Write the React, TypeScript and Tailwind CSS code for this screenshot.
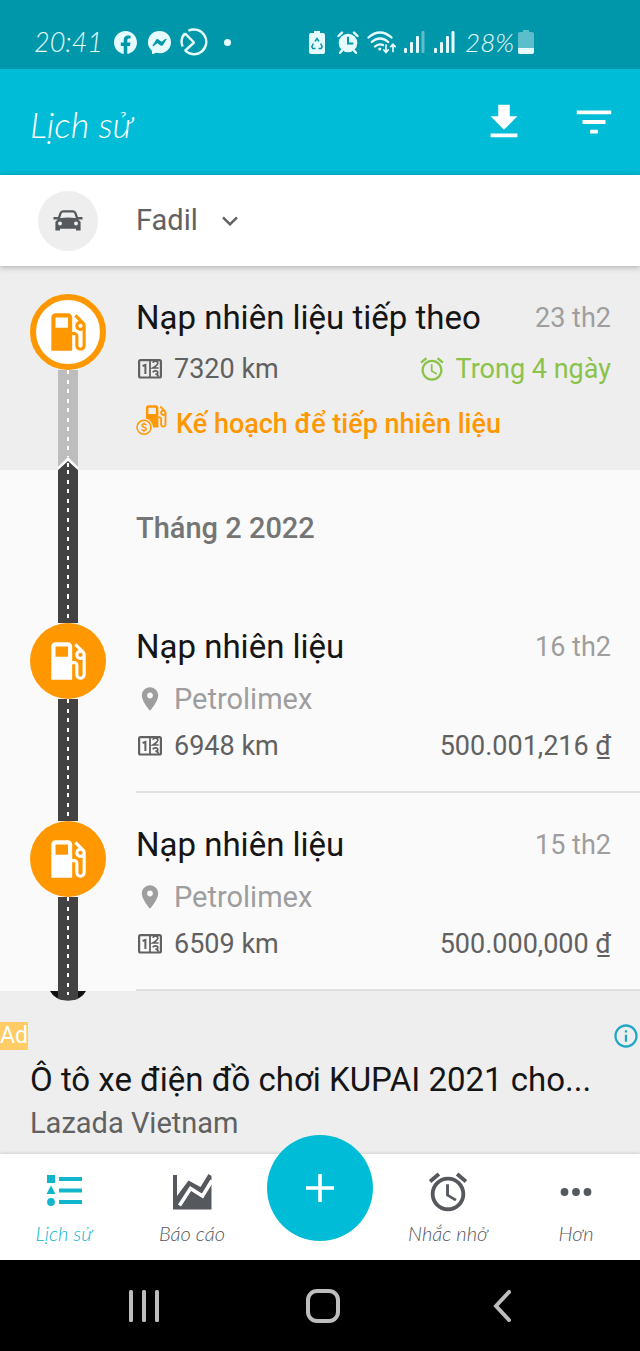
import type { ReactNode } from "react";

type IconProps = { className?: string };

function Glyph({ d, className = "" }: { d: string; className?: string }) {
  return (
    <svg viewBox="0 0 24 24" className={`shrink-0 fill-current ${className}`} aria-hidden="true">
      <path d={d} />
    </svg>
  );
}

const PUMP =
  "M19.77 7.23l.01-.01-3.72-3.72L15 4.56l2.11 2.11c-.94.36-1.61 1.26-1.61 2.33 0 1.38 1.12 2.5 2.5 2.5.36 0 .69-.08 1-.21v7.21c0 .55-.45 1-1 1s-1-.45-1-1V14c0-1.1-.9-2-2-2h-1V5c0-1.1-.9-2-2-2H6c-1.1 0-2 .9-2 2v16h10v-7.5h1.5v5c0 1.38 1.12 2.5 2.5 2.5s2.5-1.12 2.5-2.5V9c0-.69-.28-1.32-.73-1.77zM12 10H6V5h6v5zm6 0c-.55 0-1-.45-1-1s.45-1 1-1 1 .45 1 1-.45 1-1 1z";
const ALARM =
  "M22 5.72l-4.6-3.86-1.29 1.53 4.6 3.86L22 5.72zM7.88 3.39L6.6 1.86 2 5.71l1.29 1.53 4.59-3.85zM12.5 8H11v6l4.75 2.85.75-1.23-4-2.37V8zM12 4c-4.97 0-9 4.03-9 9s4.02 9 9 9c4.97 0 9-4.03 9-9s-4.03-9-9-9zm0 16c-3.87 0-7-3.13-7-7s3.13-7 7-7 7 3.13 7 7-3.13 7-7 7z";
const PLACE =
  "M12 2C8.13 2 5 5.13 5 9c0 5.25 7 13 7 13s7-7.75 7-13c0-3.87-3.13-7-7-7zm0 9.5c-1.38 0-2.5-1.12-2.5-2.5s1.12-2.5 2.5-2.5 2.5 1.12 2.5 2.5-1.12 2.5-2.5 2.5z";
const DOWNLOAD = "M19 9h-4V3H9v6H5l7 7 7-7zM5 18v2h14v-2H5z";
const FILTER = "M10 18h4v-2h-4v2zM3 6v2h18V6H3zm3 7h12v-2H6v2z";
const INFO =
  "M11 7h2v2h-2zm0 4h2v6h-2zm1-9C6.48 2 2 6.48 2 12s4.48 10 10 10 10-4.48 10-10S17.52 2 12 2zm0 18c-4.41 0-8-3.59-8-8s3.59-8 8-8 8 3.59 8 8-3.59 8-8 8z";
const FACEBOOK =
  "M24 12.07C24 5.41 18.63 0 12 0S0 5.4 0 12.07C0 18.1 4.39 23.1 10.13 24v-8.44H7.08v-3.49h3.04V9.41c0-3.02 1.8-4.7 4.54-4.7 1.31 0 2.68.24 2.68.24v2.97h-1.5c-1.5 0-1.96.93-1.96 1.89v2.26h3.32l-.53 3.5h-2.8V24C19.62 23.1 24 18.1 24 12.07";
const MESSENGER =
  "M.001 11.639C.001 4.949 5.241 0 12.001 0S24 4.95 24 11.639c0 6.689-5.24 11.638-12 11.638-1.21 0-2.38-.16-3.47-.46a.96.96 0 00-.64.05l-2.39 1.05a.96.96 0 01-1.35-.85l-.07-2.14a.97.97 0 00-.32-.68A11.39 11.389 0 01.002 11.64zm8.32-2.19l-3.52 5.6c-.35.53.32 1.139.82.75l3.79-2.87c.26-.2.6-.2.87 0l2.8 2.1c.84.63 2.04.4 2.6-.48l3.52-5.6c.35-.53-.32-1.13-.82-.75l-3.79 2.87c-.25.2-.6.2-.86 0l-2.8-2.1a1.8 1.8 0 00-2.61.48z";

function Car({ className = "" }: IconProps) {
  return (
    <svg viewBox="0 0 30 22" className={className} aria-hidden="true">
      <path d="M5.400 9.500 7.600 3.200Q8.200 1.400 10 1.400h10q1.800 0 2.400 1.800L24.600 9.500" fill="none" stroke="currentColor" strokeWidth="2.300" />
      <path d="M.5 7h4.400v2.400H.5zM25.100 7h4.400v2.400h-4.400z" fill="currentColor" />
      <path
        fillRule="evenodd"
        fill="currentColor"
        d="M6 8.200q9-1.600 18 0l3.600 3.600v8.800h-4.600v-1.800H7v1.800H2.400v-8.800zM7 11.400a2 2 0 1 0 0 4 2 2 0 0 0 0-4zM23 11.400a2 2 0 1 0 0 4 2 2 0 0 0 0-4z"
      />
    </svg>
  );
}

function Odometer({ className = "" }: IconProps) {
  return (
    <svg viewBox="0 0 24 20" className={className} fill="none" stroke="currentColor" aria-hidden="true">
      <rect x="1.100" y="1.100" width="21.800" height="17.400" rx="1.500" strokeWidth="2.200" />
      <path d="M12 1v17.500" strokeWidth="1.800" />
      <path d="M4.600 7 7.400 5.900v9" strokeWidth="2" />
      <path d="M14.800 3.800q.6-1.600 2.600-1.600 2.400 0 2.400 2 0 1.600-5 4.800h5.800" strokeWidth="1.700" />
      <path d="M14.800 13.400q.6-1.600 2.600-1.600 2.400 0 2.400 1.700 0 1.700-2.400 1.700 2.800.2 2.800 2.600" strokeWidth="1.700" />
    </svg>
  );
}

function PlanIcon({ className = "" }: IconProps) {
  return (
    <svg viewBox="0 0 32 34" className={className} aria-hidden="true">
      <g transform="translate(5 -1.500) scale(1.240)">
        <path d={PUMP} fill="currentColor" />
      </g>
      <circle cx="8" cy="24.300" r="9" fill="#eeeeee" />
      <circle cx="8" cy="24.300" r="7" fill="none" stroke="currentColor" strokeWidth="1.500" />
      <path
        d="M10.300 22.300Q9.900 21 8 21t-2.100 1.500q0 1.300 2.100 1.700t2.200 1.800q0 1.500-2.200 1.500-2 0-2.400-1.400M8 19.600V21M8 27.500V29"
        fill="none"
        stroke="currentColor"
        strokeWidth="1.400"
      />
    </svg>
  );
}

function SignalBars({ weak = false }: { weak?: boolean }) {
  return (
    <svg viewBox="0 0 21 22" className="h-[22px] w-[21px] fill-current" aria-hidden="true">
      <rect x="0" y="17" width="3" height="5" rx="1" />
      <rect x="6" y="11" width="3" height="11" rx="1" />
      <rect x="12" y="5" width="3" height="17" rx="1" />
      <rect x="17.500" y="0" width="3" height="22" rx="1" opacity={weak ? 0.4 : 1} />
    </svg>
  );
}

function StatusBar() {
  return (
    <div className="flex h-[69px] items-end justify-between bg-[#0097aa] pr-[106px] pb-[11px] pl-[34px] text-[#e6fbfd]">
      <div className="flex h-8 items-center">
        <span className="w-20 font-[Lato] text-[27px] font-light italic">20:41</span>
        <Glyph d={FACEBOOK} className="size-[23px]" />
        <Glyph d={MESSENGER} className="ml-[11px] size-[23px]" />
        <svg viewBox="0 0 28 28" className="ml-[9px] size-7" fill="none" stroke="currentColor" strokeWidth="2.400" aria-hidden="true">
          <path d="M8.300 2.800A12.400 12.400 0 1 1 5.200 22.700M2.600 18.500A12.400 12.400 0 0 1 5 5.400" />
          <path d="M5 5.400 14 14.500 4.800 23" strokeLinejoin="round" />
        </svg>
        <span className="ml-4 size-[7px] rounded-full bg-current" />
      </div>
      <div className="flex h-8 items-center">
        <svg viewBox="0 0 16 23" className="h-[23px] w-4" aria-hidden="true">
          <path d="M5 0h6v2h3q2 0 2 2v17q0 2-2 2H2q-2 0-2-2V4q0-2 2-2h3z" fill="currentColor" />
          <path d="M6 10.500 8 7.500l2 3M11.600 12.500l1.600 3.200-1 1.800H9.500M6.500 17.500H3.800l-1-1.800 1.600-3.200" fill="none" stroke="#0097aa" strokeWidth="1.500" />
        </svg>
        <svg viewBox="0 0 22 23" className="ml-3 h-[23px] w-[22px]" fill="none" stroke="currentColor" strokeLinecap="round" aria-hidden="true">
          <circle cx="11" cy="12" r="9.300" fill="currentColor" stroke="none" />
          <path d="M1.500 5 5 1.600M20.500 5 17 1.600M5 19.500l-2 2.300M17 19.500l2 2.300" strokeWidth="2.400" />
          <path d="M11 6.500v6h4.500" stroke="#0097aa" strokeWidth="2" />
        </svg>
        <svg viewBox="0 0 30 23" className="ml-2 h-[23px] w-[30px]" fill="none" stroke="currentColor" strokeWidth="2.300" strokeLinecap="round" aria-hidden="true">
          <path d="M1.500 6.500Q7 1.500 13 1.500t11.500 5M4.800 11Q8.500 7.500 13 7.500t8.200 3.500M8 15.500q2.300-2.200 5-2.200 1.700 0 3 .8" />
          <circle cx="12.800" cy="18" r="1.600" fill="currentColor" stroke="none" />
          <path d="M19 14v7M16.800 19l2.200 2.400 2.200-2.400M26 20.500v-7M23.800 15.600 26 13.200l2.200 2.400" strokeWidth="1.700" />
        </svg>
        <span className="ml-[7px] flex gap-[9px]">
          <SignalBars weak />
          <SignalBars />
        </span>
        <span className="ml-[10px] font-[Lato] text-[26px] font-light italic">28%</span>
        <svg viewBox="0 0 16 24" className="ml-1 h-6 w-4" aria-hidden="true">
          <path d="M5 0h6v2h3q2 0 2 2v18q0 2-2 2H2q-2 0-2-2V4q0-2 2-2h3z" fill="currentColor" opacity="0.400" />
          <path d="M0 18h16v4q0 2-2 2H2q-2 0-2-2z" fill="currentColor" />
        </svg>
      </div>
    </div>
  );
}

function AppBar() {
  return (
    <header className="flex h-[106px] items-center bg-[#00bcd7] pr-[23px] pl-[30px] text-white">
      <h1 className="flex-1 pt-1 font-[Lato] text-[36px] font-light italic">Lịch sử</h1>
      <button type="button" aria-label="Tải xuống">
        <Glyph d={DOWNLOAD} className="size-[46px]" />
      </button>
      <button type="button" aria-label="Lọc" className="ml-11">
        <Glyph d={FILTER} className="size-[46px]" />
      </button>
    </header>
  );
}

function VehiclePicker() {
  return (
    <div className="relative flex h-[91px] items-center bg-white pl-[38px] text-[#616161] shadow-[0_1px_6px_rgba(0,0,0,0.3)]">
      <span className="flex size-[60px] items-center justify-center rounded-full bg-[#eeeeee] text-[#55585c]">
        <Car className="h-[22px] w-[30px]" />
      </span>
      <label className="ml-[38px] flex items-center">
        <select aria-label="Xe" className="field-sizing-content appearance-none bg-transparent pr-[42px] text-[29px]">
          <option>Fadil</option>
        </select>
        <svg viewBox="0 0 16 10" className="pointer-events-none -ml-[18px] h-[10px] w-4" fill="none" stroke="currentColor" strokeWidth="2.500" aria-hidden="true">
          <path d="M1 1.300 8 8.300l7-7" />
        </svg>
      </label>
    </div>
  );
}

function Road({ className = "" }: IconProps) {
  return (
    <div className={`flex w-5 justify-center ${className}`}>
      <div className="w-[2px] bg-[repeating-linear-gradient(to_bottom,white_0_4px,transparent_4px_10px,white_10px_14px,transparent_14px_19px)]" />
    </div>
  );
}

function Entry({ title, date, rail, children, className = "" }: { title: string; date: string; rail: ReactNode; children: ReactNode; className?: string }) {
  return (
    <li className="flex">
      <div className="flex w-[136px] shrink-0 flex-col items-center">{rail}</div>
      <div className={`min-w-0 flex-1 pt-8 pr-[29px] ${className}`}>
        <div className="flex items-center justify-between">
          <h3 className="text-[33px] leading-10 text-[#151515]">{title}</h3>
          <time className="text-[27px] leading-10 text-[#9e9e9e]">{date}</time>
        </div>
        {children}
      </div>
    </li>
  );
}

function Distance({ value }: { value: string }) {
  return (
    <span className="flex items-center gap-3">
      <Odometer className="ml-[2px] h-5 w-6" />
      {value}
    </span>
  );
}

function FuelEntry({ date, distance, cost }: { date: string; distance: string; cost: string }) {
  return (
    <Entry
      title="Nạp nhiên liệu"
      date={date}
      className="border-b-2 border-[#e0e0e0] pb-[29px]"
      rail={
        <>
          <Road className="h-7 bg-[#424242]" />
          <span className="flex size-[76px] items-center justify-center rounded-full bg-[#ff9800] text-white">
            <Glyph d={PUMP} className="size-[50px]" />
          </span>
          <Road className="flex-1 bg-[#424242]" />
        </>
      }
    >
      <p className="mt-4 flex items-center gap-[10px] text-[29px] leading-8 text-[#9e9e9e]">
        <Glyph d={PLACE} className="size-7" />
        Petrolimex
      </p>
      <p className="mt-[15px] flex items-center justify-between text-[27px] leading-8 text-[#616161]">
        <Distance value={distance} />
        <span>{cost}</span>
      </p>
    </Entry>
  );
}

function NextFuel() {
  return (
    <ul className="bg-[#eeeeee]">
      <Entry
        title="Nạp nhiên liệu tiếp theo"
        date="23 th2"
        className="pb-[30px]"
        rail={
          <>
            <span className="mt-7 flex size-[76px] items-center justify-center rounded-full border-6 border-[#ff9800] bg-white text-[#ff9800]">
              <Glyph d={PUMP} className="size-[50px]" />
            </span>
            <Road className="flex-1 bg-[#bdbdbd]" />
            <svg viewBox="0 0 20 13" className="h-[13px] w-5" aria-hidden="true">
              <path d="M0 0h20v13H0z" fill="#bdbdbd" />
              <path d="M0 10 10 0l10 10v3H0z" fill="#ffffff" />
              <path d="M0 13 10 4l10 9z" fill="#424242" />
              <path d="M9 6h2v4H9z" fill="#ffffff" />
            </svg>
          </>
        }
      >
        <p className="mt-[15px] flex items-center justify-between text-[27px] leading-8 text-[#616161]">
          <Distance value="7320 km" />
          <span className="flex items-center gap-[10px] text-[#8bc34a]">
            <Glyph d={ALARM} className="size-7" />
            Trong 4 ngày
          </span>
        </p>
        <button type="button" className="mt-[23px] flex items-center gap-2 text-[27px] leading-8 font-medium text-[#ff9800]">
          <PlanIcon className="-mt-2 h-[34px] w-8" />
          Kế hoạch để tiếp nhiên liệu
        </button>
      </Entry>
    </ul>
  );
}

function History() {
  return (
    <section>
      <div className="flex h-[125px]">
        <div className="flex w-[136px] justify-center">
          <Road className="bg-[#424242]" />
        </div>
        <h2 className="flex items-center pb-2 text-[29px] font-medium text-[#757575]">Tháng 2 2022</h2>
      </div>
      <ul>
        <FuelEntry date="16 th2" distance="6948 km" cost="500.001,216 ₫" />
        <FuelEntry date="15 th2" distance="6509 km" cost="500.000,000 ₫" />
      </ul>
    </section>
  );
}

function AdBanner() {
  return (
    <aside className="flex-1 bg-[#eeeeee] pb-[15px]">
      <svg viewBox="0 0 36 10" className="ml-[50px] h-[10px] w-9" aria-hidden="true">
        <path d="M0 0h36q-5 9.500-18 9.500T0 0z" fill="#111111" />
        <path d="M8 0h20v8q-10 2.500-20 0z" fill="#424242" />
        <path d="M17 1h2v3h-2z" fill="#ffffff" />
      </svg>
      <div className="mt-[21px] flex items-center justify-between">
        <span className="bg-[#ffcc66] text-[23px] leading-7 text-white">Ad</span>
        <a href="#ad-info" aria-label="Thông tin quảng cáo" className="text-[#1fa9c4]">
          <Glyph d={INFO} className="size-7" />
        </a>
      </div>
      <a href="#ad" className="mt-[10px] block px-[30px]">
        <span className="block truncate text-[33px] leading-10 text-[#151515]">Ô tô xe điện đồ chơi KUPAI 2021 cho...</span>
        <span className="mt-[7px] block text-[29px] leading-8 text-[#616161]">Lazada Vietnam</span>
      </a>
    </aside>
  );
}

function Tab({ label, active = false, children }: { label: string; active?: boolean; children: ReactNode }) {
  return (
    <button
      type="button"
      className={`flex flex-col items-center pt-[15px] font-[Lato] text-[20px] leading-6 italic ${active ? "text-[#12b5cc]" : "text-[#55585c]"}`}
    >
      <span className="flex h-[46px] items-center">{children}</span>
      <span className="mt-[6px] font-light">{label}</span>
    </button>
  );
}

function TabBar() {
  return (
    <nav className="relative grid h-[106px] grid-cols-5 bg-white shadow-[0_-1px_3px_rgba(0,0,0,0.12)]">
      <Tab label="Lịch sử" active>
        <svg viewBox="0 0 36 36" className="size-9 fill-current" aria-hidden="true">
          <path d="M1 1h8v8H1zM5 11.500 9.500 20h-9zM13 3h23v4H13zM13 14.500h23v4H13zM13 26h23v4H13z" />
          <circle cx="5" cy="28" r="3.900" />
        </svg>
      </Tab>
      <Tab label="Báo cáo">
        <svg viewBox="0 0 39 36" className="h-9 w-[39px]" aria-hidden="true">
          <path d="M0 1h4v21L15.500 6.500l12 6.500L35.500 0 38.500 2v33.500H0z" fill="currentColor" />
          <path d="M6.500 31.500 17.500 14.500l12 7.500L39 6.500" fill="none" stroke="#ffffff" strokeWidth="3.600" />
        </svg>
      </Tab>
      <div className="flex justify-center">
        <button type="button" aria-label="Thêm" className="-mt-[19px] flex size-[106px] items-center justify-center rounded-full bg-[#00bcd7] text-white">
          <svg viewBox="0 0 28 28" className="size-7 fill-current" aria-hidden="true">
            <path d="M12.200 0h3.600v12.200H28v3.600H15.800V28h-3.600V15.800H0v-3.600h12.200z" />
          </svg>
        </button>
      </div>
      <Tab label="Nhắc nhở">
        <Glyph d={ALARM} className="size-[46px]" />
      </Tab>
      <Tab label="Hơn">
        <svg viewBox="0 0 32 8" className="h-2 w-8 fill-current" aria-hidden="true">
          <circle cx="4.500" cy="4" r="3.900" />
          <circle cx="16" cy="4" r="3.900" />
          <circle cx="27.500" cy="4" r="3.900" />
        </svg>
      </Tab>
    </nav>
  );
}

function SystemBar() {
  return (
    <div className="grid h-[91px] grid-cols-3 items-center justify-items-center bg-black pr-12 pl-[54px] text-[#bdbdbd]">
      <button type="button" aria-label="Ứng dụng gần đây">
        <svg viewBox="0 0 30 32" className="h-8 w-[30px] fill-current" aria-hidden="true">
          <rect x="0" y="0" width="4" height="32" rx="1.500" />
          <rect x="13" y="0" width="4" height="32" rx="1.500" />
          <rect x="26" y="0" width="4" height="32" rx="1.500" />
        </svg>
      </button>
      <button type="button" aria-label="Trang chủ" className="h-[34px] w-[34px] rounded-[11px] border-4 border-current" />
      <button type="button" aria-label="Quay lại">
        <svg viewBox="0 0 18 32" className="h-8 w-[18px]" fill="none" stroke="currentColor" strokeWidth="4" strokeLinecap="round" aria-hidden="true">
          <path d="M16 2 3 16l13 14" />
        </svg>
      </button>
    </div>
  );
}

export default function App() {
  return (
    <div className="flex min-h-screen flex-col bg-[#fafafa] font-[Roboto,sans-serif]">
      <StatusBar />
      <AppBar />
      <VehiclePicker />
      <main className="flex flex-1 flex-col">
        <NextFuel />
        <History />
        <AdBanner />
      </main>
      <TabBar />
      <SystemBar />
    </div>
  );
}
